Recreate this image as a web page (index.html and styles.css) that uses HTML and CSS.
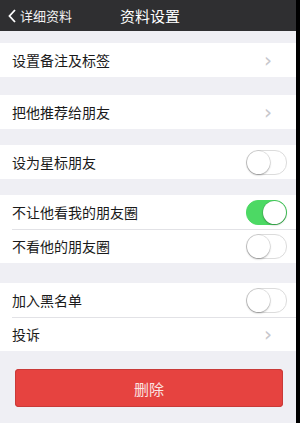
FILE: index.html
```html
<!DOCTYPE html>
<html lang="zh-CN">
<head>
    <meta charset="UTF-8">
    <meta name="viewport" content="width=device-width, initial-scale=1.0">
    <title>资料设置</title>
    <link rel="stylesheet" href="styles.css">
</head>
<body>
    <div class="app">
        <div class="topbar">
            <div class="back">
                <svg width="8" height="14" viewBox="0 0 8 14"><path d="M7 1 L1.5 7 L7 13" fill="none" stroke="#fff" stroke-width="1.8"/></svg>
                <span>详细资料</span>
            </div>
            <div class="title">资料设置</div>
        </div>

        <div class="group g1">
            <div class="row"><span>设置备注及标签</span><span class="arrow">&#x203A;</span></div>
        </div>

        <div class="group g2">
            <div class="row"><span>把他推荐给朋友</span><span class="arrow">&#x203A;</span></div>
        </div>

        <div class="group g3">
            <div class="row"><span>设为星标朋友</span><span class="switch"></span></div>
        </div>

        <div class="group g4">
            <div class="row"><span>不让他看我的朋友圈</span><span class="switch on"></span></div>
            <div class="row"><span>不看他的朋友圈</span><span class="switch"></span></div>
        </div>

        <div class="group g5">
            <div class="row"><span>加入黑名单</span><span class="switch"></span></div>
            <div class="row"><span>投诉</span><span class="arrow">&#x203A;</span></div>
        </div>

        <div class="btn-cont">
            <button type="button" class="del">删除</button>
        </div>
    </div>
</body>
</html>
```

FILE: styles.css
```css
body {
    margin: 0;
    background-color: #000;
    font-family: "Noto Sans CJK SC", "Liberation Sans", sans-serif;
}
.app {
    width: 296px;
    height: 423px;
    background-color: #efeff4;
    overflow: hidden;
}
.topbar {
    height: 31px;
    background-color: #2f2f31;
    color: #fff;
    display: flex;
    align-items: center;
    position: relative;
}
.back {
    display: flex;
    align-items: center;
    gap: 4px;
    padding-left: 8px;
    font-size: 13px;
    color: #f0f0f0;
}
.title {
    position: absolute;
    left: 0;
    right: 0;
    text-align: center;
    font-size: 15px;
    padding-left: 4px;
}
.group {
    background-color: #fff;
}
.g1 { margin-top: 12px; }
.g2 { margin-top: 18px; }
.g3 { margin-top: 16px; }
.g4 { margin-top: 16px; }
.g5 { margin-top: 20px; }
.row {
    height: 34px;
    display: flex;
    align-items: center;
    justify-content: space-between;
    padding: 0 9px 0 12px;
    font-size: 14px;
    color: #1a1a1a;
    position: relative;
}
.row + .row::before {
    content: "";
    position: absolute;
    top: 0;
    left: 12px;
    right: 0;
    border-top: 1px solid #e2e2e6;
}
.arrow {
    color: #c7c7cc;
    font-size: 20px;
    font-family: "DejaVu Sans", sans-serif;
    margin-right: 15px;
    line-height: 1;
}
.switch {
    width: 39px;
    height: 23px;
    border-radius: 12px;
    border: 1px solid #dcdcdc;
    background-color: #fff;
    position: relative;
}
.switch::after {
    content: "";
    position: absolute;
    top: 0;
    left: 0;
    width: 23px;
    height: 23px;
    border-radius: 50%;
    background-color: #fff;
    box-shadow: 0 1px 2px rgba(0, 0, 0, 0.3), 0 0 0 0.5px rgba(0, 0, 0, 0.15);
}
.switch.on {
    background-color: #4cd964;
    border-color: #4cd964;
}
.switch.on::after {
    left: 16px;
}
.btn-cont {
    padding: 18px 13px 0 15px;
}
.del {
    width: 100%;
    height: 38px;
    border: none;
    border-radius: 4px;
    background-color: #e64340;
    color: #fbe3e3;
    font-size: 15px;
    font-family: "Noto Sans CJK SC", sans-serif;
    box-shadow: inset 0 0 0 1px #c93a38;
}
```
